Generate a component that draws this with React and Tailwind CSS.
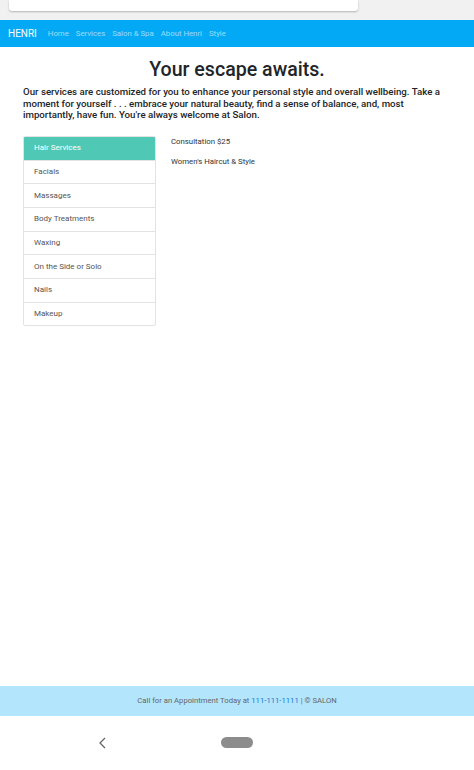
import React from 'react';

const services = [
    'Hair Services',
    'Facials',
    'Massages',
    'Body Treatments',
    'Waxing',
    'On the Side or Solo',
    'Nails',
    'Makeup',
];

const App = () => {
    return (
        <div className="h-[770px] w-full flex flex-col bg-white font-['Roboto',sans-serif] text-[#212529]">
            {/* Browser chrome strip */}
            <div className="h-[20px] bg-[#f1f1f1] pl-[9px]">
                <div className="w-[349px] h-[11px] bg-white rounded-b-[3px] shadow-[0_1px_2px_rgba(0,0,0,0.25)]"></div>
            </div>

            {/* Navbar */}
            <nav className="h-[27px] bg-[#03a9f4] flex items-center px-[8px]">
                <span className="text-white text-[10px] mr-[11px]">HENRI</span>
                <div className="flex gap-[7px] text-[7.8px] text-white/60">
                    <span>Home</span>
                    <span>Services</span>
                    <span>Salon &amp; Spa</span>
                    <span>About Henri</span>
                    <span>Style</span>
                </div>
            </nav>

            {/* Main */}
            <main className="flex-1 px-[23px]">
                <h1 className="text-center text-[19.6px] font-medium mt-[10px] leading-[26px]">Your escape awaits.</h1>
                <p className="text-[9.7px] font-medium leading-[11.5px] mt-[3px]">
                    Our services are customized for you to enhance your personal style and overall wellbeing. Take a moment for yourself . . . embrace your natural beauty, find a sense of balance, and, most importantly, have fun. You're always welcome at Salon.
                </p>

                <div className="flex mt-[15px]">
                    <div className="w-[133px] border border-[#e3e3e3] rounded-[2px] overflow-hidden">
                        {services.map((s, i) => (
                            <div
                                key={s}
                                className={
                                    i === 0
                                        ? 'h-[23px] flex items-center px-[10px] text-[8px] bg-[#4fc9b5] text-white'
                                        : 'h-[23.7px] flex items-center px-[10px] text-[8px] text-[#555] border-t border-[#e3e3e3]'
                                }
                            >
                                {s}
                            </div>
                        ))}
                    </div>
                    <div className="ml-[15px] text-[7.8px] text-[#333]">
                        <div className="mt-[0px]">Consultation $25</div>
                        <div className="mt-[9px]">Women's Haircut &amp; Style</div>
                    </div>
                </div>
            </main>

            {/* Footer */}
            <footer className="h-[30px] bg-[#b3e5fc] flex items-center justify-center text-[7.7px] text-[#666]">
                Call for an Appointment Today at&nbsp;<span className="text-[#1976d2]">111-111-1111</span>&nbsp;| © SALON
            </footer>

            {/* Android nav bar */}
            <div className="h-[54px] flex items-center relative">
                <svg className="absolute left-[98px] top-[21px]" width="9" height="12" viewBox="0 0 9 12">
                    <path d="M7 1 L2 6 L7 11" fill="none" stroke="#666" strokeWidth="1.3" />
                </svg>
                <div className="absolute left-[221px] top-[21px] w-[32px] h-[11px] rounded-full bg-[#8c8c8c]"></div>
            </div>
        </div>
    );
};

export default App;
